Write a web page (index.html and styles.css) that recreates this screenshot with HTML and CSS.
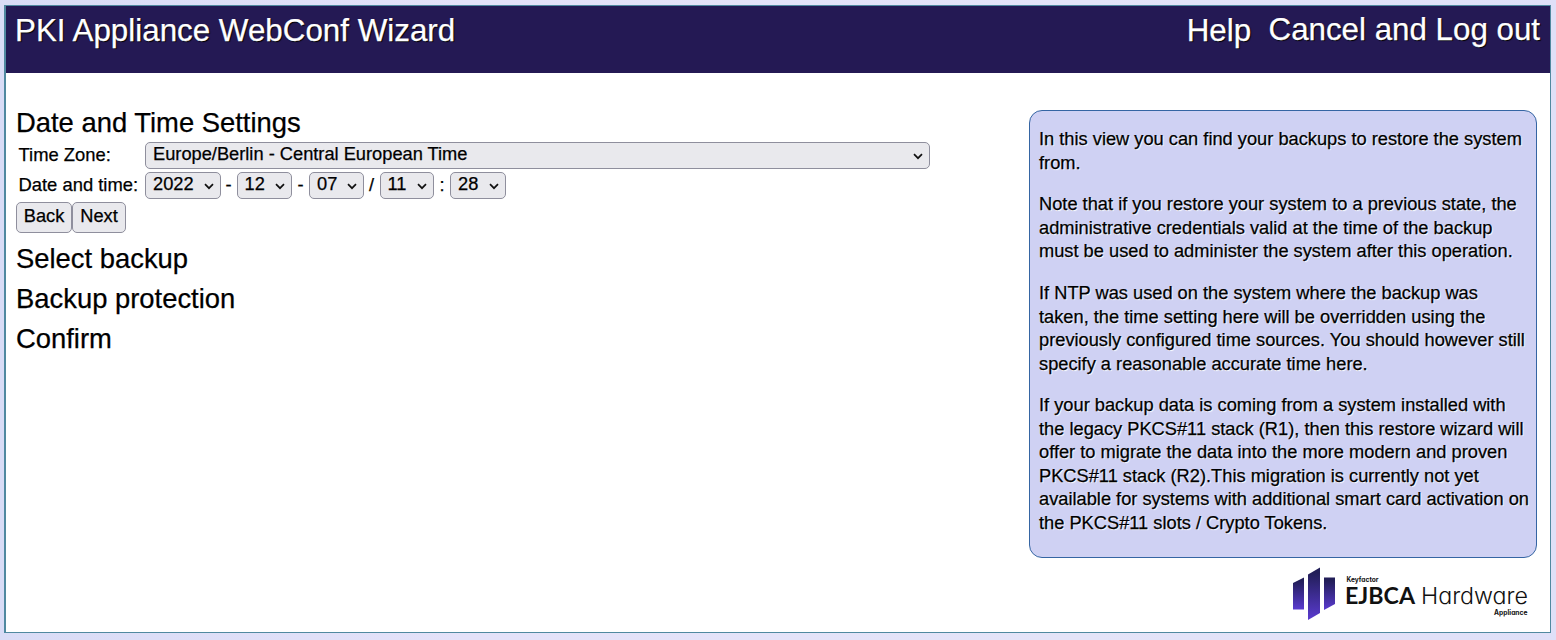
FILE: index.html
```html
<!DOCTYPE html>
<html lang="en">
<head>
    <meta charset="UTF-8">
    <title>PKI Appliance WebConf Wizard</title>
    <link rel="stylesheet" href="styles.css">
</head>
<body>
<div class="page">
    <!-- Header -->
    <header class="header">
        <h1 class="title">PKI Appliance WebConf Wizard</h1>
        <nav class="nav">
            <a class="help-link" href="#">Help</a>
            <a class="logout-link" href="#">Cancel and Log out</a>
        </nav>
    </header>

    <div class="content">
        <!-- Wizard steps -->
        <main class="wizard">
            <h2>Date and Time Settings</h2>
            <form class="settings">
                <label class="row-label" for="timezone">Time Zone:</label>
                <div class="row">
                    <span class="select timezone">
                        <select id="timezone"><option>Europe/Berlin - Central European Time</option></select>
                        <svg class="arrow" viewBox="0 0 10 7"><path d="M1 1.2 L5 5.2 L9 1.2"/></svg>
                    </span>
                </div>
                <label class="row-label" for="year">Date and time:</label>
                <div class="row">
                    <span class="select year">
                        <select id="year"><option>2022</option></select>
                        <svg class="arrow" viewBox="0 0 10 7"><path d="M1 1.2 L5 5.2 L9 1.2"/></svg>
                    </span>
                    <span class="sep">-</span>
                    <span class="select month">
                        <select><option>12</option></select>
                        <svg class="arrow" viewBox="0 0 10 7"><path d="M1 1.2 L5 5.2 L9 1.2"/></svg>
                    </span>
                    <span class="sep wide">-</span>
                    <span class="select day">
                        <select><option>07</option></select>
                        <svg class="arrow" viewBox="0 0 10 7"><path d="M1 1.2 L5 5.2 L9 1.2"/></svg>
                    </span>
                    <span class="sep">/</span>
                    <span class="select hour">
                        <select><option>11</option></select>
                        <svg class="arrow" viewBox="0 0 10 7"><path d="M1 1.2 L5 5.2 L9 1.2"/></svg>
                    </span>
                    <span class="sep">:</span>
                    <span class="select minute">
                        <select><option>28</option></select>
                        <svg class="arrow" viewBox="0 0 10 7"><path d="M1 1.2 L5 5.2 L9 1.2"/></svg>
                    </span>
                </div>
            </form>
            <div class="buttons">
                <button class="back">Back</button>
                <button class="next">Next</button>
            </div>
            <h2>Select backup</h2>
            <h2>Backup protection</h2>
            <h2>Confirm</h2>
        </main>

        <!-- Help box and logo -->
        <aside class="side">
            <div class="help">
                <p>In this view you can find your backups to restore the system<br>from.</p>
                <p>Note that if you restore your system to a previous state, the<br>administrative credentials valid at the time of the backup<br>must be used to administer the system after this operation.</p>
                <p>If NTP was used on the system where the backup was<br>taken, the time setting here will be overridden using the<br>previously configured time sources. You should however still<br>specify a reasonable accurate time here.</p>
                <p>If your backup data is coming from a system installed with<br>the legacy PKCS#11 stack (R1), then this restore wizard will<br>offer to migrate the data into the more modern and proven<br>PKCS#11 stack (R2).This migration is currently not yet<br>available for systems with additional smart card activation on<br>the PKCS#11 slots / Crypto Tokens.</p>
            </div>
            <svg class="logo" width="238" height="54" viewBox="0 0 238 54">
                <defs>
                    <linearGradient id="bar" x1="0" y1="0" x2="0" y2="1">
                        <stop offset="0.1" stop-color="#221e58"/>
                        <stop offset="1" stop-color="#5a3bd0"/>
                    </linearGradient>
                </defs>
                <path fill="url(#bar)" d="M1 15 L12 9.500 V41.500 H1 Z"/>
                <path fill="url(#bar)" d="M16 6.500 L28 -0.500 V45 L16 52 Z"/>
                <path fill="url(#bar)" d="M32 9.500 H43 V36 L32 42 Z"/>
                <text class="brand-small" x="54.500" y="13.500" textLength="32" lengthAdjust="spacingAndGlyphs">Keyfactor</text>
                <text class="brand-bold" x="53" y="36" textLength="70" lengthAdjust="spacingAndGlyphs">EJBCA</text>
                <text class="brand-light" x="129" y="36" textLength="107" lengthAdjust="spacingAndGlyphs">Hardware</text>
                <text class="brand-small" x="202" y="47" textLength="33.500" lengthAdjust="spacingAndGlyphs">Appliance</text>
            </svg>
        </aside>
    </div>
</div>
</body>
</html>
```
FILE: styles.css
```css
/* General Page Styling */
* {
    margin: 0;
    padding: 0;
    box-sizing: border-box;
}

body {
    height: 640px;
    padding: 5px 5px 7px 4px;
    overflow: hidden;
    background: linear-gradient(90deg, #d9dcf6, #e4e2f9 30%, #e4e4f8 70%, #dfe0f8);
    font-family: "Liberation Sans", Arial, sans-serif;
    font-size: 18.25px;
    line-height: 23.5px;
    color: #000;
    -webkit-text-stroke: 0.25px;
}

.page {
    height: 628px;
    border: 1px solid #5089a0;
    border-left-width: 2px;
    background: #fff;
}

/* Header */
.header {
    height: 67px;
    padding: 6px 10px 0 9px;
    display: flex;
    justify-content: space-between;
    background: #241954;
    color: #fff;
    text-shadow: 1px 1px 1px #000;
}

.title,
.nav {
    font-size: 31.3px;
    font-weight: normal;
    line-height: 37px;
}

.title {
    font-size: 31.35px;
}

.nav {
    display: flex;
    gap: 17.5px;
}

.nav a {
    color: #fff;
    text-decoration: none;
}

.logout-link {
    margin-top: -1px;
}

/* Content */
.content {
    display: flex;
    justify-content: space-between;
    padding: 37px 13px 0 10px;
}

.wizard {
    width: 930px;
}

h2 {
    font-size: 27.4px;
    font-weight: normal;
    line-height: 40.3px;
}

.wizard h2:first-child {
    line-height: 25px;
}

/* Settings form */
.settings {
    display: grid;
    grid-template-columns: 126px 785px;
    column-gap: 3px;
    row-gap: 3px;
    padding-top: 7px;
}

.row-label {
    padding-left: 2.5px;
    font-size: 18.4px;
    line-height: 25px;
}

.row {
    display: flex;
    line-height: 25px;
}

.sep {
    width: 16px;
    text-align: center;
}

.sep.wide {
    width: 17px;
}

.select {
    position: relative;
    height: 27px;
}

.select select {
    appearance: none;
    display: block;
    width: 100%;
    height: 100%;
    padding: 0 0 4px 7px;
    border: 1px solid #8f8f9d;
    border-radius: 5px;
    background: #e9e9ed;
    font: inherit;
    line-height: 21px;
    color: #000;
}

.arrow {
    position: absolute;
    right: 7px;
    top: 11px;
    width: 10px;
    height: 7px;
    fill: none;
    stroke: #111;
    stroke-width: 1.7;
}

.timezone {
    width: 785px;
}

.year {
    width: 75.5px;
}

.month,
.minute {
    width: 55.5px;
}

.day,
.hour {
    width: 54.5px;
}

/* Buttons */
.buttons {
    display: flex;
    gap: 0;
    padding: 3px 0 5.5px;
}

button {
    height: 31px;
    padding-bottom: 4px;
    border: 1px solid #8f8f9d;
    border-radius: 5px;
    background: #e9e9ed;
    font: inherit;
    color: #000;
}

.back {
    width: 56px;
}

.next {
    width: 54px;
}

/* Help box */
.side {
    width: 508px;
    display: flex;
    flex-direction: column;
    align-items: flex-end;
}

.help {
    width: 508px;
    height: 448px;
    padding: 16px 0 0 9px;
    border: 1px solid #3565a3;
    border-radius: 13px;
    background: #cfd1f3;
    text-shadow: 1px 1px 1px #fff;
    white-space: nowrap;
}

.help p {
    margin-bottom: 18.25px;
}

/* Logo */
.logo {
    margin: 10px 7px 0 0;
    overflow: visible;
    -webkit-text-stroke: 0;
}

.logo text {
    font-family: Inter, "Open Sans", sans-serif;
    font-feature-settings: "cv11";
    fill: #111;
}

.logo .brand-small {
    font-size: 7px;
    font-weight: 700;
}

.logo .brand-bold {
    font-family: Lato, sans-serif;
    font-size: 23.5px;
    font-weight: 700;
}

.logo .brand-light {
    font-size: 22.5px;
    font-weight: 300;
}
```
